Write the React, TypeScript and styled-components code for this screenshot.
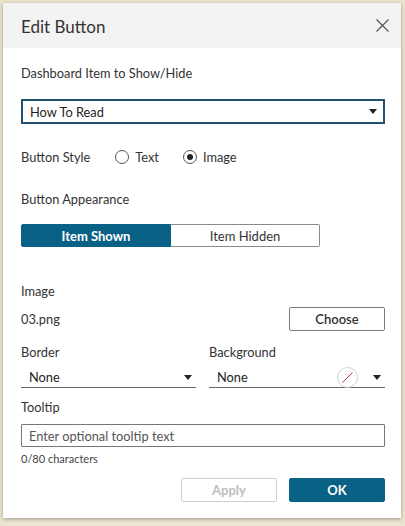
import React from "react";
import styled, { createGlobalStyle } from "styled-components";

const Global = createGlobalStyle`
  html, body { margin: 0; padding: 0; }
  body {
    background: #ece5cf;
    font-family: "Lato", "Liberation Sans", sans-serif;
    color: #333;
  }
  * { box-sizing: border-box; }
`;

const Page = styled.div`
  width: 405px;
  height: 526px;
  padding: 3px 4px 0 3px;
  overflow: hidden;
`;

const Dialog = styled.div`
  width: 398px;
  height: 515px;
  background: #fff;
  box-shadow: 0 1px 4px rgba(0, 0, 0, 0.35);
  display: flex;
  flex-direction: column;
`;

const Header = styled.div`
  height: 45px;
  background: #f3f3f3;
  display: flex;
  align-items: center;
  justify-content: space-between;
  padding: 0 12px 0 18px;
`;

const Title = styled.div`
  font-size: 17px;
  color: #333;
  padding-top: 2px;
`;

const CloseBtn = styled.div`
  width: 14px;
  height: 14px;
  display: flex;
  align-items: center;
  justify-content: center;
`;

const Body = styled.div`
  padding: 17px 16px 0 18px;
  display: flex;
  flex-direction: column;
`;

const Label = styled.div<{ $mt?: number }>`
  font-size: 12.8px;
  line-height: 16px;
  color: #333;
  margin-top: ${(p) => p.$mt ?? 0}px;
`;

const Select = styled.div<{ $mt?: number }>`
  margin-top: ${(p) => p.$mt ?? 0}px;
  height: 25px;
  border: 2px solid #22506f;
  display: flex;
  align-items: center;
  justify-content: space-between;
  padding: 0 6px 0 7px;
  font-size: 12.8px;
  color: #222;
`;

const Caret = styled.span`
  width: 0;
  height: 0;
  border-left: 4px solid transparent;
  border-right: 4px solid transparent;
  border-top: 5px solid #222;
`;

const Row = styled.div<{ $mt?: number }>`
  display: flex;
  align-items: center;
  margin-top: ${(p) => p.$mt ?? 0}px;
`;

const RadioGroup = styled.div`
  display: flex;
  align-items: center;
  margin-left: 25px;
  gap: 24px;
`;

const RadioItem = styled.label`
  display: flex;
  align-items: center;
  gap: 6px;
  font-size: 12.8px;
  line-height: 16px;
  color: #333;
`;

const RadioCircle = styled.span<{ $checked?: boolean }>`
  width: 14px;
  height: 14px;
  border-radius: 50%;
  border: 1px solid #555;
  display: flex;
  align-items: center;
  justify-content: center;
  &::after {
    content: "";
    width: 6px;
    height: 6px;
    border-radius: 50%;
    background: ${(p) => (p.$checked ? "#222" : "transparent")};
  }
`;

const Segmented = styled.div<{ $mt?: number }>`
  margin-top: ${(p) => p.$mt ?? 0}px;
  display: flex;
  width: 299px;
  height: 23px;
`;

const Segment = styled.div<{ $active?: boolean }>`
  flex: 1;
  display: flex;
  align-items: center;
  justify-content: center;
  font-size: 13px;
  font-weight: ${(p) => (p.$active ? 700 : 400)};
  color: ${(p) => (p.$active ? "#fff" : "#333")};
  background: ${(p) => (p.$active ? "#0a6186" : "#fff")};
  border: 1px solid ${(p) => (p.$active ? "#0a6186" : "#8a8a8a")};
  border-radius: ${(p) => (p.$active ? "2px 0 0 2px" : "0 2px 2px 0")};
  ${(p) => (p.$active ? "" : "border-left: none;")}
`;

const SpaceRow = styled.div<{ $mt?: number }>`
  display: flex;
  align-items: center;
  justify-content: space-between;
  margin-top: ${(p) => p.$mt ?? 0}px;
`;

const FileName = styled.div`
  font-size: 12.8px;
  color: #333;
`;

const Button = styled.div<{ $variant?: "primary" | "disabled" | "default" }>`
  width: 96px;
  height: 24px;
  display: flex;
  align-items: center;
  justify-content: center;
  font-size: 13px;
  border-radius: 2px;
  font-weight: ${(p) => (p.$variant === "default" ? 600 : 700)};
  color: ${(p) =>
    p.$variant === "primary" ? "#fff" : p.$variant === "disabled" ? "#bdbdbd" : "#333"};
  background: ${(p) => (p.$variant === "primary" ? "#0a6186" : "#fff")};
  border: 1px solid
    ${(p) =>
      p.$variant === "primary" ? "#0a6186" : p.$variant === "disabled" ? "#cfcfcf" : "#7a7a7a"};
`;

const TwoCol = styled.div<{ $mt?: number }>`
  display: grid;
  grid-template-columns: 175px 176px;
  column-gap: 13px;
  margin-top: ${(p) => p.$mt ?? 0}px;
`;

const Column = styled.div`
  display: flex;
  flex-direction: column;
`;

const LineSelect = styled.div`
  margin-top: 8px;
  height: 20px;
  border-bottom: 1px solid #666;
  display: flex;
  align-items: center;
  padding: 0 4px 1px 8px;
  font-size: 12.8px;
  color: #222;
  gap: 8px;
`;

const Grow = styled.span`
  flex: 1;
`;

const Swatch = styled.span`
  width: 21px;
  height: 21px;
  border-radius: 50%;
  border: 1px solid #cfcfcf;
  display: flex;
  align-items: center;
  justify-content: center;
  margin-right: 7px;
`;

const Input = styled.div<{ $mt?: number }>`
  margin-top: ${(p) => p.$mt ?? 0}px;
  height: 23px;
  border: 1px solid #777;
  border-radius: 1px;
  display: flex;
  align-items: center;
  padding: 0 7px;
  font-size: 12.8px;
  color: #555;
`;

const Hint = styled.div`
  margin-top: 5px;
  font-size: 11px;
  line-height: 14px;
  color: #444;
`;

const Footer = styled.div`
  display: flex;
  justify-content: flex-end;
  gap: 12px;
  margin-top: 12px;
`;

export default function App() {
  return (
    <>
      <Global />
      <Page>
        <Dialog>
          <Header>
            <Title>Edit Button</Title>
            <CloseBtn>
              <svg width="13" height="13" viewBox="0 0 13 13">
                <path d="M0.5 0.5 L12.5 12.5 M12.5 0.5 L0.5 12.5" stroke="#555" strokeWidth="1.2" fill="none" />
              </svg>
            </CloseBtn>
          </Header>
          <Body>
            <Label>Dashboard Item to Show/Hide</Label>
            <Select $mt={18}>
              <span>How To Read</span>
              <Caret />
            </Select>
            <Row $mt={25}>
              <Label>Button Style</Label>
              <RadioGroup>
                <RadioItem>
                  <RadioCircle />
                  Text
                </RadioItem>
                <RadioItem>
                  <RadioCircle $checked />
                  Image
                </RadioItem>
              </RadioGroup>
            </Row>
            <Label $mt={26}>Button Appearance</Label>
            <Segmented $mt={17}>
              <Segment $active>Item Shown</Segment>
              <Segment>Item Hidden</Segment>
            </Segmented>
            <Label $mt={36}>Image</Label>
            <SpaceRow $mt={8}>
              <FileName>03.png</FileName>
              <Button $variant="default">Choose</Button>
            </SpaceRow>
            <TwoCol $mt={13}>
              <Column>
                <Label>Border</Label>
                <LineSelect>
                  <Grow>None</Grow>
                  <Caret />
                </LineSelect>
              </Column>
              <Column>
                <Label>Background</Label>
                <LineSelect>
                  <Grow>None</Grow>
                  <Swatch>
                    <svg width="13" height="13" viewBox="0 0 13 13">
                      <path d="M1.5 11.5 L11.5 1.5" stroke="#b03030" strokeWidth="1" />
                    </svg>
                  </Swatch>
                  <Caret />
                </LineSelect>
              </Column>
            </TwoCol>
            <Label $mt={11}>Tooltip</Label>
            <Input $mt={9}>Enter optional tooltip text</Input>
            <Hint>0/80 characters</Hint>
            <Footer>
              <Button $variant="disabled">Apply</Button>
              <Button $variant="primary">OK</Button>
            </Footer>
          </Body>
        </Dialog>
      </Page>
    </>
  );
}
